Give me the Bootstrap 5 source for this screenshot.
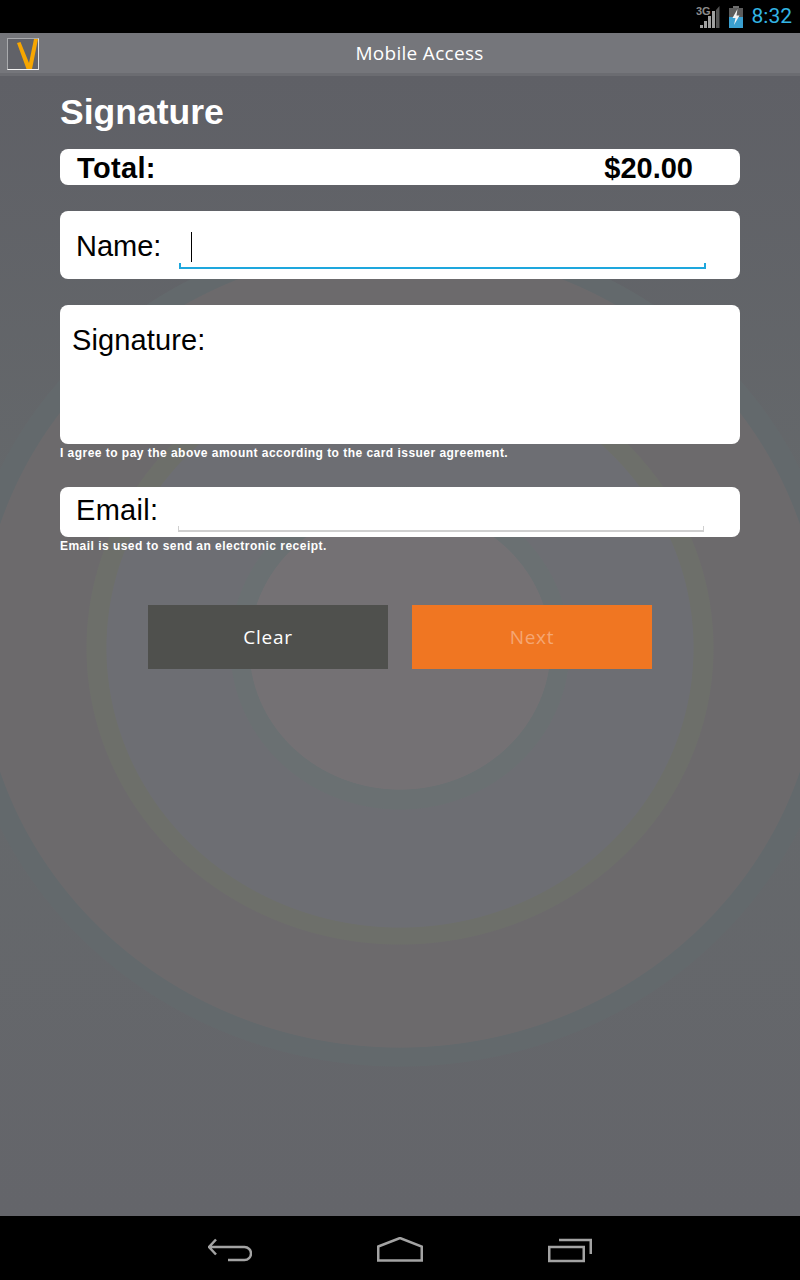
<!DOCTYPE html>
<html lang="en">
<head>
    <meta charset="UTF-8">
    <meta name="viewport" content="width=device-width, initial-scale=1.0">
    <title>Mobile Access</title>

    <link href="https://cdn.jsdelivr.net/npm/bootstrap@5.3.0/dist/css/bootstrap.min.css" rel="stylesheet">

    <style>
        body {
            width: 800px;
            height: 1280px;
            overflow: hidden;
            background: #000;
            font-family: "Liberation Sans", Arial, sans-serif;
        }
        .status-bar {
            height: 33px;
            padding-right: 8px;
        }
        .clock {
            font-family: Roboto, sans-serif;
            font-size: 21px;
            line-height: 33px;
            color: #33b5e5;
            margin-left: 8px;
        }
        .title-bar {
            height: 43px;
            background: #75767b;
            border-bottom: 3px solid #6b6c71;
            color: #fff;
            font-family: "Open Sans", sans-serif;
            font-size: 19px;
            letter-spacing: .3px;
        }
        .title-bar .title-text {
            margin-left: 39px;
        }
        .logo-box {
            left: 7px;
            top: 5px;
            width: 32px;
            height: 32px;
            border: 1px solid #a9aaad;
            border-bottom-color: #f2f2f2;
            border-right-color: #e0e0e0;
            background: #616268;
        }
        /* rings of the backdrop, innermost first */
        .screen {
            height: 1140px;
            padding: 0 60px;
            background:
                radial-gradient(ellipse 151px 142px at 400px 572px, #747174 99.5%, transparent 100%),
                radial-gradient(ellipse 170px 162px at 400px 572px, #6a7072 99.5%, transparent 100%),
                radial-gradient(ellipse 294px 280px at 400px 572px, #6d6e73 99.7%, transparent 100%),
                radial-gradient(ellipse 314px 297px at 400px 572px, #6d6f6a 99.7%, transparent 100%),
                radial-gradient(ellipse 421px 400px at 400px 572px, #6c6a6c 99.8%, transparent 100%),
                radial-gradient(ellipse 443px 419px at 400px 572px, #63696c 99.8%, transparent 100%),
                linear-gradient(#5f6066, #666a6c 45%, #64656a);
        }
        .page-title {
            font-size: 35.5px;
            font-weight: 700;
            color: #fff;
            line-height: 40px;
            padding-top: 16px;
            margin: 0 0 17px;
        }
        .form-panel {
            background: #fff;
            border-radius: 8px;
            color: #000;
        }
        .total-row {
            height: 36px;
            margin-bottom: 26px;
            padding: 0 47px 0 17px;
            font-size: 29px;
            font-weight: 700;
            line-height: 38px;
        }
        .total-label {
            letter-spacing: .35px;
        }
        .name-row {
            height: 68px;
            margin-bottom: 26px;
            padding-left: 16px;
            font-size: 29px;
        }
        .sign-panel {
            height: 139px;
            padding: 16px 12px;
            font-size: 29px;
            line-height: 38px;
            letter-spacing: .12px;
        }
        .email-row {
            height: 50px;
            padding-left: 16px;
            font-size: 29px;
            line-height: 46px;
            letter-spacing: .3px;
        }
        .row-label {
            width: 103px;
            flex: none;
        }
        .name-row .row-label {
            line-height: 70px;
        }
        .holo-field {
            position: absolute;
            height: 6px;
            border: 1px solid #cfcfcf;
            border-top: 0;
        }
        .holo-field.is-active {
            left: 119px;
            top: 52px;
            width: 527px;
            border: solid #1ea7dd;
            border-width: 0 2px 2px;
        }
        .holo-field.is-idle {
            left: 118px;
            top: 39px;
            width: 526px;
            border-bottom-width: 2px;
        }
        .text-caret {
            position: absolute;
            left: 131px;
            top: 21px;
            width: 1px;
            height: 30px;
            background: #000;
        }
        .hint-text {
            color: #fff;
            font-size: 12px;
            font-weight: 700;
            line-height: 18px;
            letter-spacing: .47px;
        }
        .hint-sign {
            margin-bottom: 25px;
        }
        .button-row {
            margin-top: 50px;
            gap: 24px;
        }
        .action-btn {
            width: 240px;
            height: 64px;
            border: 0;
            border-radius: 0;
            font-family: "Open Sans", sans-serif;
            font-size: 19px;
            letter-spacing: .7px;
        }
        .btn-clear, .btn-clear:hover {
            background: #4f504d;
            color: #fff;
        }
        .btn-next:disabled {
            background: #f07622;
            color: #f5a673;
            opacity: 1;
        }
        .nav-bar {
            height: 64px;
            gap: 125px;
            padding-top: 4px;
        }
    </style>
</head>
<body>

    <div class="status-bar d-flex justify-content-end align-items-center">
        <svg width="24" height="24" viewBox="0 0 24 24">
            <text x="0" y="10" font-family="Liberation Sans, sans-serif" font-size="11" font-weight="700" fill="#8c8c8c">3G</text>
            <path d="M4 23h3v-3H4zM8 23h3v-7H8zM12 23h3V11h-3zM16 23h3V6h-3z" fill="#a0a0a0"/>
            <path d="M20 23h3.5V1L20 5z" fill="#555"/>
        </svg>
        <svg class="ms-2" width="16" height="22" viewBox="0 0 16 22">
            <rect x="5" y="0" width="6" height="2" fill="#6f6f6f"/>
            <rect x="1" y="2" width="14" height="9" fill="#5c5c5c"/>
            <rect x="1" y="11" width="14" height="11" fill="#3a9fd0"/>
            <path d="M9.5 3 4.5 12h3L6 19l5.5-9.5h-3z" fill="#f4f4f4"/>
        </svg>
        <span class="clock">8:32</span>
    </div>

    <div class="title-bar position-relative d-flex justify-content-center align-items-center">
        <div class="logo-box position-absolute">
            <svg class="d-block" width="30" height="30" viewBox="0 0 30 30">
                <path d="M9 4 12.5 3 21 24 26 0H30L24 30H18.500z" fill="#f7a600"/>
            </svg>
        </div>
        <span class="title-text">Mobile Access</span>
    </div>

    <div class="screen">
        <h1 class="page-title">Signature</h1>

        <div class="form-panel total-row d-flex justify-content-between">
            <span class="total-label">Total:</span>
            <span>$20.00</span>
        </div>

        <div class="form-panel name-row position-relative d-flex">
            <span class="row-label">Name:</span>
            <span class="text-caret"></span>
            <div class="holo-field is-active"></div>
        </div>

        <div class="form-panel sign-panel">Signature:</div>
        <div class="hint-text hint-sign">I agree to pay the above amount according to the card issuer agreement.</div>

        <div class="form-panel email-row position-relative d-flex">
            <span class="row-label">Email:</span>
            <div class="holo-field is-idle"></div>
        </div>
        <div class="hint-text">Email is used to send an electronic receipt.</div>

        <div class="button-row d-flex justify-content-center">
            <button type="button" class="btn action-btn btn-clear">Clear</button>
            <button type="button" class="btn action-btn btn-next" disabled>Next</button>
        </div>
    </div>

    <div class="nav-bar d-flex justify-content-center align-items-center">
        <svg width="44" height="26" viewBox="0 0 44 26" fill="none" stroke="#a3a3a3" stroke-width="2.5">
            <path d="M8 2.5 1 10l7 7.5M1 10h35.5a6.5 6.5 0 0 1 0 13H20"/>
        </svg>
        <svg width="46" height="26" viewBox="0 0 46 26" fill="none" stroke="#a3a3a3" stroke-width="2.5">
            <path d="M1.25 9.5 23 1l21.75 8.5v14H1.25z"/>
        </svg>
        <svg width="44" height="26" viewBox="0 0 44 26" fill="none" stroke="#a3a3a3" stroke-width="2.5">
            <path d="M1.25 10h34.5v14H1.25z"/>
            <path d="M11 3h31.75v14"/>
        </svg>
    </div>

</body>
</html>
